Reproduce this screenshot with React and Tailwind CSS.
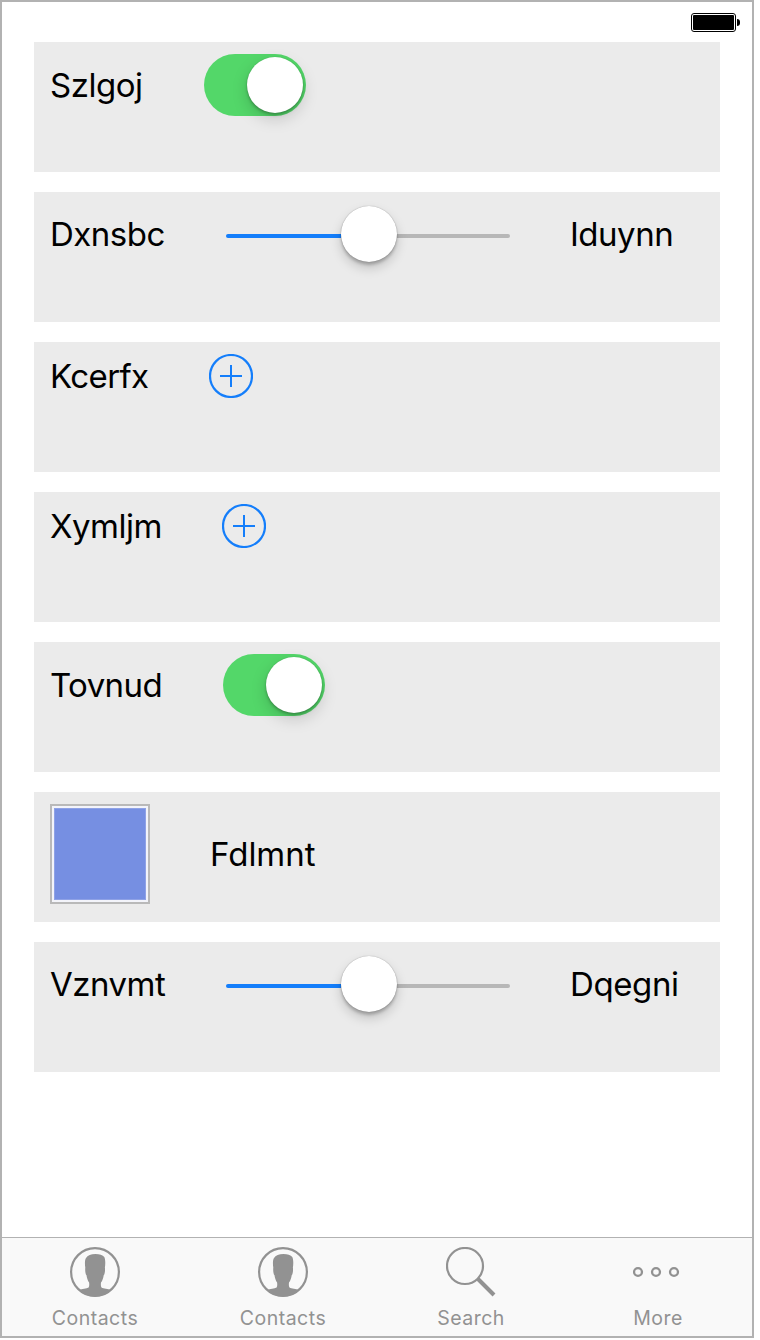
function Row({ height, children }) {
  return (
    <section className="h-[130px] bg-[#ebebeb] pl-4 pt-3">
      <div className={`flex items-center ${height}`}>{children}</div>
    </section>
  );
}

function Label({ className = "", children }) {
  return (
    <span className={`shrink-0 whitespace-nowrap text-[33px] leading-[40px] text-black ${className}`}>
      {children}
    </span>
  );
}

function Switch() {
  return (
    <div className="flex h-[62px] w-[102px] items-center justify-end rounded-full bg-[#53d769] pr-[3px]">
      <div className="size-14 rounded-full bg-white shadow-[0_6px_16px_rgba(0,0,0,0.17),0_2px_3px_rgba(0,0,0,0.24),0_0_1px_rgba(0,0,0,0.2)]" />
    </div>
  );
}

function Slider() {
  return (
    <div className="flex h-[60px] w-[284px] shrink-0 items-center">
      <div className="mt-1 h-1 w-[115px] rounded-l-full bg-[#147efb]" />
      <div className="z-10 size-14 shrink-0 rounded-full bg-white shadow-[0_6px_12px_rgba(0,0,0,0.18),0_3px_3px_rgba(0,0,0,0.2),0_0_1px_rgba(0,0,0,0.4)]" />
      <div className="mt-1 h-1 w-[113px] rounded-r-full bg-[#b7b7b7]" />
    </div>
  );
}

function AddButton() {
  return (
    <button className="size-11" aria-label="Add">
      <svg viewBox="0 0 44 44" fill="none" stroke="#147efb" strokeWidth="2" className="size-11">
        <circle cx="22" cy="22" r="21" strokeWidth="2.2" />
        <path d="M22 11v22M11 22h22" />
      </svg>
    </button>
  );
}

function ContactIcon() {
  return (
    <svg viewBox="0 0 50 50" className="size-[50px]">
      <circle cx="25" cy="25" r="23.9" fill="none" stroke="#929292" strokeWidth="2.2" />
      <path
        fill="#929292"
        d="M9 43.2C12 41.4 16.5 41.6 18.6 40.4C19.4 39.5 19.3 37.5 19.1 35.6C17.6 33.4 16.9 30.8 16.5 28.2C15.3 27.2 15 23 15.3 20.8C14.8 17 14.6 13 16 11C17.5 8.4 21 7 25.5 7C29.5 7 32.8 7.9 34.3 10C35.6 13 35.4 17 34.9 20.8C35.3 23 34.9 27.2 33.7 28.2C33.3 30.8 32.6 33.4 31 35.6C30.8 37.5 30.7 39.5 31.5 40.4C33.5 41.6 38 41.4 41 43.2C37 47.2 31.5 49.5 25 49.5C18.5 49.5 13 47.2 9 43.2Z"
      />
    </svg>
  );
}

function SearchIcon() {
  return (
    <svg viewBox="0 0 50 50" fill="none" stroke="#929292" className="size-[50px]">
      <circle cx="19" cy="19" r="18" strokeWidth="2.2" />
      <path d="M32 32L48 48" strokeWidth="4" />
    </svg>
  );
}

function MoreIcon() {
  return (
    <svg viewBox="0 0 50 50" fill="none" stroke="#929292" strokeWidth="2.3" className="size-[50px]">
      <circle cx="5" cy="25" r="3.95" />
      <circle cx="23" cy="25" r="3.95" />
      <circle cx="41" cy="25" r="3.95" />
    </svg>
  );
}

function Tab({ icon, children }) {
  return (
    <div className="flex flex-col items-center pt-[9px] text-[#929292]">
      {icon}
      <span className="mt-[9px] text-[19.5px] leading-6 tracking-[0.5px]">{children}</span>
    </div>
  );
}

export default function App() {
  return (
    <div className="h-[1340px] w-[760px] bg-white font-['Inter',sans-serif]">
      <div className="flex h-[1338px] w-[754px] flex-col border-2 border-[#b2b2b2]">
        <header className="flex h-10 items-start justify-end pr-3 pt-[11px]">
          <div className="h-[19px] w-[45px] rounded-[3px] border border-black p-px">
            <div className="h-full w-full rounded-[1px] bg-black" />
          </div>
          <div className="ml-px mt-1.5 h-[7px] w-[3px] rounded-r-full bg-black" />
        </header>
        <main className="flex flex-1 flex-col gap-5 px-8">
          <Row height="h-[62px]">
            <Label className="w-[154px] tracking-[-0.5px]">Szlgoj</Label>
            <Switch />
          </Row>
          <Row height="h-[60px]">
            <Label className="w-[176px] tracking-[-0.5px]">Dxnsbc</Label>
            <Slider />
            <Label className="pl-[60px] tracking-[-0.5px]">Iduynn</Label>
          </Row>
          <Row height="h-11">
            <Label className="w-[159px] tracking-[-0.6px]">Kcerfx</Label>
            <AddButton />
          </Row>
          <Row height="h-11">
            <Label className="w-[172px] tracking-[-0.5px]">Xymljm</Label>
            <AddButton />
          </Row>
          <Row height="h-[62px]">
            <Label className="w-[173px] tracking-[-0.6px]">Tovnud</Label>
            <Switch />
          </Row>
          <Row height="h-[100px]">
            <div className="size-[100px] border-2 border-[#b9b9b9] bg-[#f3f4fa] p-[2px]">
              <div className="h-full w-full border border-[#8fa2e6] bg-[#768fe2]" />
            </div>
            <Label className="pl-[60px]">Fdlmnt</Label>
          </Row>
          <Row height="h-[60px]">
            <Label className="w-[176px] tracking-[-0.5px]">Vznvmt</Label>
            <Slider />
            <Label className="pl-[60px] tracking-[-0.4px]">Dqegni</Label>
          </Row>
        </main>
        <nav className="grid h-[99px] grid-cols-[186px_190px_186px_188px] border-t border-[#b2b2b2] bg-[#f9f9f9]">
          <Tab icon={<ContactIcon />}>Contacts</Tab>
          <Tab icon={<ContactIcon />}>Contacts</Tab>
          <Tab icon={<SearchIcon />}>Search</Tab>
          <Tab icon={<MoreIcon />}>More</Tab>
        </nav>
      </div>
    </div>
  );
}
